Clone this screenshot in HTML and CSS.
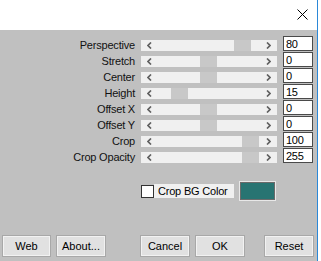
FILE: index.html
```html
<!DOCTYPE html>
<html lang="en">
<head>
    <meta charset="UTF-8">
    <meta name="viewport" content="width=device-width, initial-scale=1.0">
    <title>Perspective</title>
    <link rel="stylesheet" href="styles.css">
</head>
<body>
    <div class="window">
        <div class="titlebar">
            <svg class="close" width="11" height="11" viewBox="0 0 11 11">
                <path d="M0.5 0.5 L10.5 10.5 M10.5 0.5 L0.5 10.5" stroke="#000" stroke-width="1" fill="none"/>
            </svg>
        </div>

        <div class="panel">
            <div class="sliders">
                <div class="row">
                    <span class="label">Perspective</span>
                    <div class="track">
                        <span class="arrow"><svg width="5" height="7" viewBox="0 0 5 7"><path d="M4 0.5 L1 3.5 L4 6.5" /></svg></span>
                        <div class="lane"><div class="thumb" style="left: 76px"></div></div>
                        <span class="arrow"><svg width="5" height="7" viewBox="0 0 5 7"><path d="M1 0.5 L4 3.5 L1 6.5" /></svg></span>
                    </div>
                    <input class="value" type="text" value="80">
                </div>
                <div class="row">
                    <span class="label">Stretch</span>
                    <div class="track">
                        <span class="arrow"><svg width="5" height="7" viewBox="0 0 5 7"><path d="M4 0.5 L1 3.5 L4 6.5" /></svg></span>
                        <div class="lane"><div class="thumb" style="left: 42px"></div></div>
                        <span class="arrow"><svg width="5" height="7" viewBox="0 0 5 7"><path d="M1 0.5 L4 3.5 L1 6.5" /></svg></span>
                    </div>
                    <input class="value" type="text" value="0">
                </div>
                <div class="row">
                    <span class="label">Center</span>
                    <div class="track">
                        <span class="arrow"><svg width="5" height="7" viewBox="0 0 5 7"><path d="M4 0.5 L1 3.5 L4 6.5" /></svg></span>
                        <div class="lane"><div class="thumb" style="left: 42px"></div></div>
                        <span class="arrow"><svg width="5" height="7" viewBox="0 0 5 7"><path d="M1 0.5 L4 3.5 L1 6.5" /></svg></span>
                    </div>
                    <input class="value" type="text" value="0">
                </div>
                <div class="row">
                    <span class="label">Height</span>
                    <div class="track">
                        <span class="arrow"><svg width="5" height="7" viewBox="0 0 5 7"><path d="M4 0.5 L1 3.5 L4 6.5" /></svg></span>
                        <div class="lane"><div class="thumb" style="left: 13px"></div></div>
                        <span class="arrow"><svg width="5" height="7" viewBox="0 0 5 7"><path d="M1 0.5 L4 3.5 L1 6.5" /></svg></span>
                    </div>
                    <input class="value" type="text" value="15">
                </div>
                <div class="row">
                    <span class="label">Offset X</span>
                    <div class="track">
                        <span class="arrow"><svg width="5" height="7" viewBox="0 0 5 7"><path d="M4 0.5 L1 3.5 L4 6.5" /></svg></span>
                        <div class="lane"><div class="thumb" style="left: 42px"></div></div>
                        <span class="arrow"><svg width="5" height="7" viewBox="0 0 5 7"><path d="M1 0.5 L4 3.5 L1 6.5" /></svg></span>
                    </div>
                    <input class="value" type="text" value="0">
                </div>
                <div class="row">
                    <span class="label">Offset Y</span>
                    <div class="track">
                        <span class="arrow"><svg width="5" height="7" viewBox="0 0 5 7"><path d="M4 0.5 L1 3.5 L4 6.5" /></svg></span>
                        <div class="lane"><div class="thumb" style="left: 42px"></div></div>
                        <span class="arrow"><svg width="5" height="7" viewBox="0 0 5 7"><path d="M1 0.5 L4 3.5 L1 6.5" /></svg></span>
                    </div>
                    <input class="value" type="text" value="0">
                </div>
                <div class="row">
                    <span class="label">Crop</span>
                    <div class="track">
                        <span class="arrow"><svg width="5" height="7" viewBox="0 0 5 7"><path d="M4 0.5 L1 3.5 L4 6.5" /></svg></span>
                        <div class="lane"><div class="thumb" style="left: 84px"></div></div>
                        <span class="arrow"><svg width="5" height="7" viewBox="0 0 5 7"><path d="M1 0.5 L4 3.5 L1 6.5" /></svg></span>
                    </div>
                    <input class="value" type="text" value="100">
                </div>
                <div class="row">
                    <span class="label">Crop Opacity</span>
                    <div class="track">
                        <span class="arrow"><svg width="5" height="7" viewBox="0 0 5 7"><path d="M4 0.5 L1 3.5 L4 6.5" /></svg></span>
                        <div class="lane"><div class="thumb" style="left: 84px"></div></div>
                        <span class="arrow"><svg width="5" height="7" viewBox="0 0 5 7"><path d="M1 0.5 L4 3.5 L1 6.5" /></svg></span>
                    </div>
                    <input class="value" type="text" value="255">
                </div>
            </div>

            <div class="bg-row">
                <span class="checkbox"></span>
                <span class="check-label">Crop BG Color</span>
                <span class="swatch"></span>
            </div>

            <div class="buttons">
                <button class="btn">Web</button>
                <button class="btn">About...</button>
                <button class="btn btn-cancel">Cancel</button>
                <button class="btn">OK</button>
                <button class="btn btn-reset">Reset</button>
            </div>
        </div>
    </div>
</body>
</html>
```

FILE: styles.css
```css
/* Basic Reset */
* {
    margin: 0;
    padding: 0;
    box-sizing: border-box;
}

body {
    background: #ffffff;
    font-family: 'Liberation Sans', Arial, sans-serif;
    font-size: 11px;
    color: #000000;
}

/* Window frame */
.window {
    width: 318px;
    height: 261px;
    display: flex;
    flex-direction: column;
    border-right: 1px solid #2b88d8;
}

.titlebar {
    height: 30px;
    background: #ffffff;
    display: flex;
    justify-content: flex-end;
    padding: 9px 9px 0 0;
}

.close {
    display: block;
}

/* Panel */
.panel {
    flex: 1;
    background: #c0c0c0;
    padding-top: 6px;
}

.sliders {
    display: flex;
    flex-direction: column;
}

.row {
    height: 16px;
    display: flex;
    align-items: flex-end;
}

.label {
    width: 135px;
    margin-right: 6px;
    text-align: right;
    line-height: 13px;
    letter-spacing: -0.2px;
    color: #111111;
}

/* Scroll bar */
.track {
    width: 136px;
    height: 11px;
    margin-bottom: 1px;
    background: #f0f0f0;
    display: flex;
}

.arrow {
    width: 17px;
    display: flex;
    align-items: center;
    justify-content: center;
}

.arrow svg path {
    fill: none;
    stroke: #606060;
    stroke-width: 1.7;
}

.lane {
    flex: 1;
    position: relative;
}

.thumb {
    position: absolute;
    top: 0;
    bottom: 0;
    width: 17px;
    background-color: #c8c8c8;
}

.value {
    width: 30px;
    height: 15px;
    margin-left: 6px;
    margin-bottom: 1px;
    border: 1px solid #4a4a4a;
    background: #ffffff;
    padding: 0 2px;
    font-family: 'Liberation Sans', Arial, sans-serif;
    font-size: 11px;
    letter-spacing: -0.3px;
    color: #000000;
    outline: none;
}

/* Background colour option */
.bg-row {
    display: flex;
    align-items: center;
    margin-top: 17px;
    padding-left: 141px;
    height: 20px;
}

.checkbox {
    width: 13px;
    height: 13px;
    background: #ffffff;
    border: 1px solid #333333;
}

.check-label {
    width: 80px;
    height: 14px;
    background: #f0f0f0;
    padding-left: 4px;
    line-height: 14px;
    letter-spacing: -0.2px;
}

.swatch {
    width: 37px;
    height: 20px;
    margin-left: 5px;
    background: #287472;
    border: 1px solid #e8e8e8;
    box-shadow: inset 0 0 0 1px #6a6a6a;
}

/* Buttons */
.buttons {
    display: flex;
    margin-top: 34px;
    padding-left: 2px;
    gap: 5px;
}

.btn {
    width: 50px;
    height: 22px;
    background: #e1e1e1;
    border: 1px solid #a8a8a8;
    box-shadow: inset 0 0 0 1px #f2f2f2;
    font-family: 'Liberation Sans', Arial, sans-serif;
    font-size: 11px;
    color: #000000;
}

.btn:first-child {
    width: 49px;
}

.btn-cancel {
    margin-left: 29px;
}

.btn-reset {
    margin-left: 14px;
}
```
